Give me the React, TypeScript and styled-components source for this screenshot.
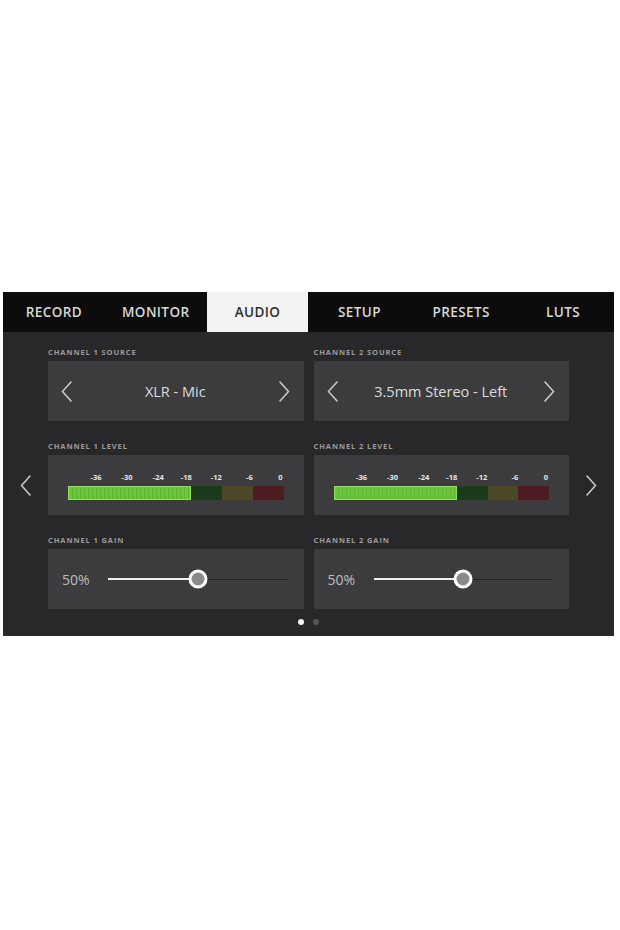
import React from "react";
import styled, { createGlobalStyle } from "styled-components";

const GlobalStyle = createGlobalStyle`
  html, body {
    margin: 0;
    padding: 0;
    background: #ffffff;
  }
  body {
    font-family: "Open Sans", "Liberation Sans", sans-serif;
  }
`;

const TABS = ["RECORD", "MONITOR", "AUDIO", "SETUP", "PRESETS", "LUTS"];
const SCALE = [
  { label: "-36", pos: 13 },
  { label: "-30", pos: 27.4 },
  { label: "-24", pos: 41.9 },
  { label: "-18", pos: 54.9 },
  { label: "-12", pos: 68.8 },
  { label: "-6", pos: 84.2 },
  { label: "0", pos: 98.6 },
];

const channels = [
  { id: 1, source: "XLR - Mic", level: 57.2, gain: 50 },
  { id: 2, source: "3.5mm Stereo - Left", level: 57.2, gain: 50 },
];

const Chevron = ({ dir }: { dir: "left" | "right" }) => (
  <svg width="11" height="21" viewBox="0 0 11 21" fill="none">
    <path
      d={dir === "left" ? "M10 1 L1.5 10.5 L10 20" : "M1 1 L9.5 10.5 L1 20"}
      stroke="#c8c8c8"
      strokeWidth="1.6"
      strokeLinecap="round"
      strokeLinejoin="round"
    />
  </svg>
);

const App = () => {
  return (
    <Page>
      <GlobalStyle />
      <Screen>
        <TabBar>
          {TABS.map((t) => (
            <Tab key={t} active={t === "AUDIO"}>
              {t}
            </Tab>
          ))}
        </TabBar>
        <Body>
          <SideNav>
            <Chevron dir="left" />
          </SideNav>
          <Grid>
            {channels.map((c) => (
              <Section key={`src${c.id}`}>
                <Label>CHANNEL {c.id} SOURCE</Label>
                <SourceBox>
                  <Chevron dir="left" />
                  <SourceText>{c.source}</SourceText>
                  <Chevron dir="right" />
                </SourceBox>
              </Section>
            ))}
            {channels.map((c) => (
              <Section key={`lvl${c.id}`}>
                <Label>CHANNEL {c.id} LEVEL</Label>
                <MeterBox>
                  <Scale>
                    {SCALE.map((s) => (
                      <ScaleMark key={s.label} style={{ left: `${s.pos}%` }}>
                        {s.label}
                      </ScaleMark>
                    ))}
                  </Scale>
                  <Bar>
                    <Fill style={{ width: `${c.level}%` }} />
                    <Zone tone="green" />
                    <Zone tone="yellow" />
                    <Zone tone="red" />
                  </Bar>
                </MeterBox>
              </Section>
            ))}
            {channels.map((c) => (
              <Section key={`gain${c.id}`}>
                <Label>CHANNEL {c.id} GAIN</Label>
                <GainBox>
                  <GainValue>{c.gain}%</GainValue>
                  <Slider>
                    <TrackOn style={{ width: `${c.gain}%` }} />
                    <TrackOff />
                    <Knob style={{ left: `${c.gain}%` }} />
                  </Slider>
                </GainBox>
              </Section>
            ))}
          </Grid>
          <SideNav>
            <Chevron dir="right" />
          </SideNav>
        </Body>
        <Dots>
          <Dot active />
          <Dot />
        </Dots>
      </Screen>
    </Page>
  );
};

export default App;

const Page = styled.div`
  padding: 292px 6px 0 3px;
`;

const Screen = styled.div`
  background: #28282b;
  height: 344px;
  display: flex;
  flex-direction: column;
  box-sizing: border-box;
`;

const TabBar = styled.div`
  height: 40px;
  display: flex;
  background: #0c0c0c;
`;

const Tab = styled.div<{ active?: boolean }>`
  flex: 1;
  display: flex;
  align-items: center;
  justify-content: center;
  font-size: 13.5px;
  font-weight: 600;
  letter-spacing: 0.4px;
  color: ${(p) => (p.active ? "#2e2e2e" : "#d8d8d8")};
  background: ${(p) => (p.active ? "#f3f3f3" : "transparent")};
`;

const Body = styled.div`
  display: flex;
  padding-top: 15px;
`;

const SideNav = styled.div`
  width: 45px;
  display: flex;
  justify-content: center;
  align-items: center;
  padding-top: 14px;
`;

const Grid = styled.div`
  flex: 1;
  display: grid;
  grid-template-columns: 1fr 1fr;
  column-gap: 10px;
  row-gap: 20px;
`;

const Section = styled.div`
  display: flex;
  flex-direction: column;
`;

const Label = styled.div`
  font-size: 7.5px;
  line-height: 10px;
  font-weight: 700;
  letter-spacing: 0.9px;
  color: #9b9b9b;
  margin-bottom: 4px;
`;

const Box = styled.div`
  height: 60px;
  background: #3c3c3f;
  box-sizing: border-box;
`;

const SourceBox = styled(Box)`
  display: flex;
  align-items: center;
  justify-content: space-between;
  padding: 0 14px 0 13px;
`;

const SourceText = styled.div`
  font-size: 14.5px;
  color: #dcdcdc;
`;

const MeterBox = styled(Box)`
  display: flex;
  flex-direction: column;
  justify-content: center;
  padding: 3px 20px 0 20px;
`;

const Scale = styled.div`
  position: relative;
  height: 9px;
  margin-bottom: 4px;
`;

const ScaleMark = styled.span`
  position: absolute;
  top: 0;
  transform: translateX(-50%);
  font-size: 7.5px;
  line-height: 9px;
  font-weight: 700;
  color: #e6e6e6;
`;

const Bar = styled.div`
  position: relative;
  height: 14px;
  display: flex;
`;

const Fill = styled.div`
  height: 100%;
  box-sizing: border-box;
  border: 1px solid #8fe055;
  background: repeating-linear-gradient(
    90deg,
    #6cc63c 0px,
    #6cc63c 3px,
    #5fb534 3px,
    #5fb534 4px
  );
`;

const zoneColors: Record<string, string> = {
  green: "#1d3a1a",
  yellow: "#4a4826",
  red: "#4c1c22",
};

const Zone = styled.div<{ tone: string }>`
  flex: 1;
  height: 100%;
  background: ${(p) => zoneColors[p.tone]};
`;

const GainBox = styled(Box)`
  display: flex;
  align-items: center;
  padding: 0 16px 0 14px;
`;

const GainValue = styled.div`
  width: 46px;
  font-size: 14px;
  color: #bdbdbd;
`;

const Slider = styled.div`
  position: relative;
  flex: 1;
  height: 20px;
  display: flex;
  align-items: center;
`;

const TrackOn = styled.div`
  height: 2px;
  background: #f0f0f0;
`;

const TrackOff = styled.div`
  flex: 1;
  height: 1px;
  background: #222224;
`;

const Knob = styled.div`
  position: absolute;
  top: 50%;
  width: 19px;
  height: 19px;
  box-sizing: border-box;
  border-radius: 50%;
  border: 3px solid #ffffff;
  background: #8a8a8c;
  transform: translate(-50%, -50%);
`;

const Dots = styled.div`
  display: flex;
  justify-content: center;
  gap: 9px;
  margin-top: 10px;
`;

const Dot = styled.div<{ active?: boolean }>`
  width: 6px;
  height: 6px;
  border-radius: 50%;
  background: ${(p) => (p.active ? "#f5f5f5" : "#55555a")};
`;
